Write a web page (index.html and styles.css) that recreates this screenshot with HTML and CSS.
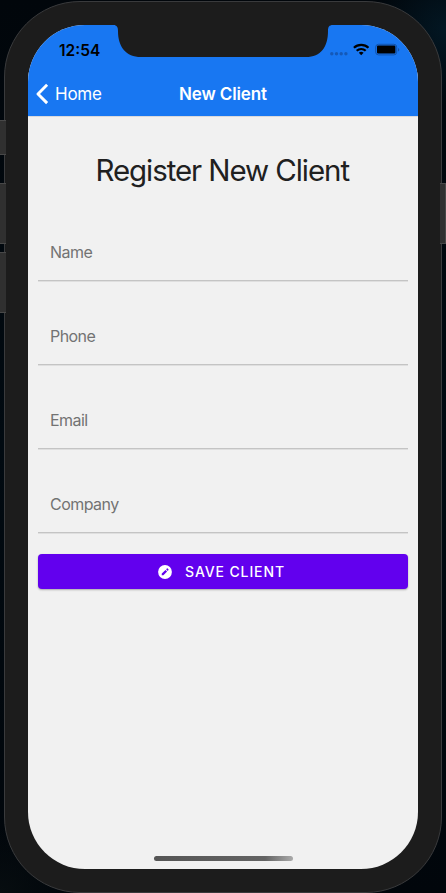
FILE: index.html
```html
<!DOCTYPE html>
<html lang="en">
<head>
<meta charset="utf-8">
<title>New Client</title>
<link rel="stylesheet" href="styles.css">
</head>
<body>
<div class="side-button mute"></div>
<div class="side-button volume-up"></div>
<div class="side-button volume-down"></div>
<div class="phone">
  <div class="screen">
    <header class="top">
      <div class="status">
        <span class="time">12:54</span>
        <svg class="indicators" width="72" height="14" viewBox="0 0 72 14">
          <g fill="#1459b8"><circle cx="3.8" cy="10.7" r="1.7"/><circle cx="8.5" cy="10.7" r="1.7"/><circle cx="13.2" cy="10.7" r="1.7"/><circle cx="17.9" cy="10.7" r="1.7"/></g>
          <g fill="none" stroke="#000" stroke-width="2.2"><path d="M25.9 4.7a10.6 10.6 0 0 1 14.6 0"/><path d="M28.7 7.8a6.5 6.5 0 0 1 9 0"/></g>
          <path d="M30.8 9.7a3.6 3.6 0 0 1 4.8 0l-2.4 2.5z"/>
          <rect x="47.7" y="1.3" width="21" height="10.6" rx="2.8" fill="none" stroke="#1353aa"/>
          <rect x="49" y="2.6" width="18.4" height="8" rx="1.1"/>
          <path d="M70 4.9a1.9 1.9 0 0 1 0 3.6z" fill="#1353aa"/>
        </svg>
      </div>
      <nav class="nav">
        <a class="back"><svg width="13" height="22" viewBox="0 0 13 22"><path d="M11.1 1.8 2 11l9.1 9.1" fill="none" stroke="#fff" stroke-width="2.9" stroke-linejoin="round"/></svg><span>Home</span></a>
        <span class="title">New Client</span>
      </nav>
    </header>
    <main class="content">
      <h1>Register New Client</h1>
      <form class="form">
        <label class="field name">Name</label>
        <label class="field phone-number">Phone</label>
        <label class="field email">Email</label>
        <label class="field company">Company</label>
        <button class="save" type="button">
          <svg width="14" height="14" viewBox="0 0 14 14"><circle cx="7" cy="7" r="6.9" fill="#fff"/><path d="m3.7 10.3.1-1.7 3.7-3.7 1.6 1.6-3.7 3.7zM8.1 4.3l.8-.8q.4-.3.8.1l.8.8q.3.4 0 .7l-.8.8z" fill="#6200ee"/></svg>
          <span>SAVE CLIENT</span>
        </button>
      </form>
    </main>
    <div class="home-bar"></div>
  </div>
  <svg class="notch" width="218" height="33" viewBox="0 0 218 33"><path d="M0 0v1c4 0 5 2 5 6 0 16 8 26 23 26h165c15 0 22-10 22-26 0-4 1-6 5-6V0z" transform="translate(-2)" fill="#1c1c1c"/></svg>
</div>
<div class="side-button power"></div>
</body>
</html>
```
FILE: styles.css
```css
* { box-sizing: border-box; }
body {
  margin: 0;
  width: 446px;
  height: 893px;
  overflow: hidden;
  position: relative;
  padding: 1px 4px 0;
  font-family: Inter, "Liberation Sans", sans-serif;
  background:
    radial-gradient(circle at 100% 30px, #031723 0, transparent 75px),
    radial-gradient(circle at 0 100%, #070d10 0, transparent 65px),
    linear-gradient(#01060b, #010a11 50%, #01060b);
}
.phone {
  position: relative;
  width: 438px;
  height: 892px;
  padding: 23px;
  border: 1px solid #393a3c;
  border-radius: 76px;
  background: #1c1c1c;
}
.screen {
  width: 390px;
  height: 844px;
  border-radius: 57px;
  overflow: hidden;
  background: #f1f1f1;
  display: flex;
  flex-direction: column;
}
.notch { position: absolute; left: 110px; top: 22px; }
.side-button {
  position: absolute;
  left: 0;
  width: 6px;
  background: #303030;
  border: 1px solid #484848;
  border-width: 1px 0;
  z-index: 1;
}
.mute { top: 120px; height: 35px; }
.volume-up { top: 183px; height: 61px; }
.volume-down { top: 252px; height: 61px; }
.power { left: 440px; top: 183px; height: 61px; border-right-width: 1px; }
.top { height: 91px; background: #1877f2; box-shadow: 0 1px 0 #d9d9dc; flex: none; }
.status {
  height: 47px;
  display: flex;
  justify-content: space-between;
  padding: 17px 18px 0 31px;
}
.time { font-size: 15.5px; font-weight: 600; line-height: 17px; }
.indicators { display: block; margin-top: 1px; }
.nav {
  height: 44px;
  display: grid;
  grid-template-columns: 1fr auto 1fr;
  align-items: center;
  color: #fff;
  font-size: 17px;
}
.back { display: flex; align-items: center; gap: 6px; padding-left: 8px; letter-spacing: -.25px; }
.title { font-weight: 600; letter-spacing: -.12px; }
.content { padding: 35px 10px 0 9.5px; flex: 1; }
h1 {
  margin: 0;
  padding-right: 1px;
  text-align: center;
  font-weight: 400;
  font-size: 29.5px;
  letter-spacing: -1.08px;
  line-height: 38px;
  color: #202020;
}
.form { padding-top: 34px; display: flex; flex-direction: column; gap: 26px; }
.field {
  height: 58px;
  padding-left: 12.5px;
  border-bottom: 1px solid #c4c4c4;
  box-shadow: 0 1px 0 #dfdfdf;
  font-size: 16px;
  letter-spacing: -.55px;
  line-height: 58px;
  color: #737373;
}
.save {
  margin-top: -5px;
  height: 35px;
  border: 0;
  border-radius: 4px;
  background: #6200ee;
  box-shadow: 0 1px 2px rgba(0, 0, 0, .3);
  color: #fff;
  font: 450 14px/35px Inter, sans-serif;
  letter-spacing: .88px;
  padding: 0 2.5px 0 0;
  display: flex;
  align-items: center;
  justify-content: center;
  gap: 13px;
}
.home-bar {
  width: 139px;
  height: 5px;
  margin: 0 auto 8px;
  border-radius: 3px;
  background: linear-gradient(90deg, #555, #636363 80%, #aaa);
}
```
